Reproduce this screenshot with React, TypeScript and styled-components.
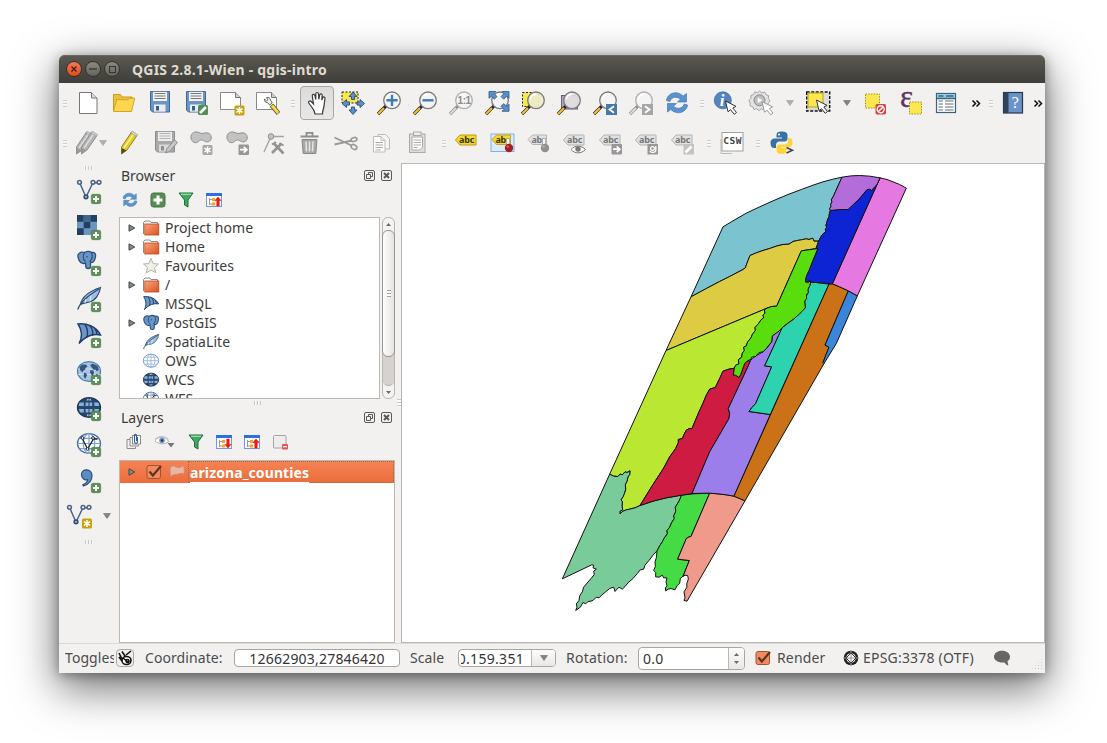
import React from "react";
import styled, { createGlobalStyle } from "styled-components";

const GlobalStyle = createGlobalStyle`
  * { box-sizing: border-box; }
  html, body { margin: 0; height: 100%; background: #fff; overflow: hidden; }
  body { font-family: "Noto Sans", "Open Sans", sans-serif; font-size: 14px; color: #3c3c3c; }
  svg { display: block; overflow: visible; flex: none; }
`;

/* ---------- window frame ---------- */

const Desktop = styled.div`
  width: 1107px;
  height: 743px;
  padding: 55px 62px 70px 59px;
  background: #fff;
`;

const Window = styled.div`
  width: 986px;
  height: 618px;
  display: flex;
  flex-direction: column;
  background: #f2f1f0;
  border-radius: 6px 6px 0 0;
  box-shadow: 0 14px 44px 2px rgba(0, 0, 0, 0.55), 0 2px 12px rgba(0, 0, 0, 0.35);
`;

const TitleBar = styled.div`
  height: 28px;
  flex: none;
  display: flex;
  align-items: center;
  gap: 3px;
  padding: 0 0 0 7px;
  border-radius: 6px 6px 0 0;
  background: linear-gradient(#5b5951, #3e3d39);
  box-shadow: inset 0 1px 0 #6a685f;
`;

const WindowButton = styled.span<{ $close?: boolean }>`
  width: 16px;
  height: 16px;
  border-radius: 50%;
  display: flex;
  align-items: center;
  justify-content: center;
  border: 1px solid #33322e;
  background: ${(p) => (p.$close ? "linear-gradient(#f37b55, #df4b1e)" : "linear-gradient(#8a887f, #65645c)")};
`;

const WindowTitle = styled.span`
  margin-left: 9px;
  font-weight: 700;
  font-size: 14px;
  letter-spacing: 0.22px;
  color: #dfdbd2;
  white-space: pre;
`;

/* ---------- tool bars ---------- */

const ToolRow = styled.div`
  height: 40px;
  flex: none;
  display: flex;
  align-items: center;
`;

const Slot = styled.div<{ $w?: number; $gap?: number }>`
  width: ${(p) => p.$w ?? 36}px;
  height: 40px;
  flex: none;
  display: flex;
  align-items: center;
  justify-content: center;
  gap: ${(p) => p.$gap ?? 0}px;
`;

const PressedButton = styled.div`
  width: 34px;
  height: 34px;
  display: flex;
  align-items: center;
  justify-content: center;
  border: 1px solid #a9a6a2;
  border-radius: 4px;
  background: linear-gradient(#dddbd9, #e9e8e6);
`;

const Grip = styled.div<{ $w: number; $pad?: number }>`
  width: ${(p) => p.$w}px;
  height: 40px;
  flex: none;
  display: flex;
  align-items: center;
  justify-content: center;
  padding-left: ${(p) => p.$pad ?? 0}px;
  &::after {
    content: "";
    width: 4px;
    height: 7px;
    background: repeating-linear-gradient(#cfcdca 0 1px, #fafafa 1px 2px, transparent 2px 3px);
  }
`;

const GripAcross = styled.div<{ $h: number }>`
  height: ${(p) => p.$h}px;
  flex: none;
  display: flex;
  align-items: center;
  justify-content: center;
  &::after {
    content: "";
    width: 8px;
    height: 4px;
    background: repeating-linear-gradient(90deg, #c9c7c4 0 1px, #fafafa 1px 2px, transparent 2px 3px);
  }
`;

const Icon24 = styled.svg.attrs({ viewBox: "0 0 24 24", width: 24, height: 24, fill: "none" })``;
const Icon16 = styled.svg.attrs({ viewBox: "0 0 16 16", width: 16, height: 16, fill: "none" })``;

const DownArrow = ({ dim }: { dim?: boolean }) => (
  <svg width="8" height="6" viewBox="0 0 8 6">
    <path d="M.5.5h7L4 5.500z" fill={dim ? "#b0aeac" : "#858381"} stroke={dim ? "#a2a09e" : "#6e6c6a"} strokeWidth=".6" />
  </svg>
);

const More = () => (
  <svg width="8" height="7" viewBox="0 0 8 7" fill="none" stroke="#111" strokeWidth="1.500">
    <path d="M.5.5l3 3-3 3M4.500.5l3 3-3 3" />
  </svg>
);

/* ---------- shared icon parts ---------- */

const GREY = "#a5a5a5";

const PlusBadge = ({ x = 14, y = 15 }: { x?: number; y?: number }) => (
  <g transform={`translate(${x} ${y})`}>
    <rect x=".3" y=".3" width="9.400" height="9.400" rx="1.600" fill="#5c9257" stroke="#467a43" strokeWidth=".6" />
    <path d="M5 2v6M2 5h6" stroke="#fff" strokeWidth="2" />
  </g>
);

const StarBadge = ({ x = 14, y = 14, color = "#c9a20c" }: { x?: number; y?: number; color?: string }) => (
  <g transform={`translate(${x} ${y})`}>
    <rect width="10" height="10" rx="1.600" fill={color} />
    <path d="M5 1.400v7.200M1.900 3.200l6.200 3.600M8.100 3.200L1.900 6.800" stroke="#fff" strokeWidth="1.500" />
  </g>
);

const Lens = ({ grey, fill = "#f4f4f4" }: { grey?: boolean; fill?: string }) => (
  <g>
    <path d="M1 23l7.800-7.800" stroke={grey ? "#8d8d8d" : "#222"} strokeWidth="3.200" />
    <path d="M1.300 22.700l5.700-5.700" stroke={grey ? "#dadada" : "#fbc62c"} strokeWidth="2" />
    <circle cx="15" cy="9.300" r="8.300" fill={fill} fillOpacity=".92" stroke={grey ? "#b0b0b0" : "#7c7c7c"} strokeWidth="1.300" />
    <path d="M9.200 8.300a6.200 6.200 0 0 1 5.700-5.200" stroke="#fff" strokeWidth="1.600" />
  </g>
);

const Tag = ({ on, children }: { on?: boolean; children?: React.ReactNode }) => (
  <Icon24>
    <path
      d="M1.500 9L6 4h16v10H6z"
      fill={on ? "#f4d92c" : "#e2e2e2"}
      stroke={on ? "#b89a10" : "#b3b3b3"}
    />
    <text x="5" y="12.300" fontSize="9" fontWeight="700" fontFamily="Noto Sans, sans-serif" letterSpacing="-.2" fill={on ? "#3c3410" : "#777"}>
      abc
    </text>
    {children}
  </Icon24>
);

const Disk = ({ grey, children }: { grey?: boolean; children?: React.ReactNode }) => (
  <Icon24>
    <path
      d="M2.500.5h19v20.500H4.500l-2-2z"
      fill={grey ? "#a9a9a9" : "#6b95c7"}
      stroke={grey ? "#8c8c8c" : "#3c6797"}
    />
    <rect x="5" y=".8" width="14" height="9.200" fill={grey ? "#ececec" : "#f3f3f3"} />
    <path d="M6.500 2.500h11M6.500 5h11M6.500 7.500h11" stroke={grey ? "#b5b5b5" : "#777"} />
    <rect x="6" y="13.500" width="11.500" height="7.200" fill={grey ? "#dadada" : "#ececec"} />
    <rect x="8" y="15" width="3" height="4.500" fill={grey ? "#909090" : "#35618f"} />
    {children}
  </Icon24>
);

const Cursor = ({ x, y, grey }: { x: number; y: number; grey?: boolean }) => (
  <path
    transform={`translate(${x} ${y})`}
    d="M0 0l2.500 10.700 2.600-2 3.600 4.600 2.300-1.800-3.700-4.500 3.200-1.600z"
    fill="#fff"
    stroke={grey ? "#999" : "#333"}
    strokeWidth="1"
  />
);

const Pencil = ({ grey }: { grey?: boolean }) => (
  <g>
    <path d="M2.500 16L12.500 1l5.500 3.500L8 19l-5.500 4z" fill={grey ? "#b4b4b4" : "#e3cd2a"} stroke={grey ? "#8f8f8f" : "#97831a"} />
    <path d="M5 17L15 2.500" stroke={grey ? "#dcdcdc" : "#f8f09a"} strokeWidth="1.500" />
    <path d="M2.700 17L7.500 19.500l-5 3.500z" fill={grey ? "#999" : "#4f4a35"} />
    <path d="M12 2L13.300.2 18.600 3.600l-1.200 1.800z" fill={grey ? "#ccc" : "#d8d8d8"} stroke={grey ? "#999" : "#888"} strokeWidth=".6" />
  </g>
);

const Blob = () => (
  <path
    d="M2 8c-.6-4 2.500-6.500 6-6 3 .5 4 2.200 7 1.200C19 2 22.600 4 22.200 8c-.3 4-4 4.600-6.500 3.200-2.400-1.400-4-2-6 .2C7 14 2.600 12.500 2 8z"
    fill="#c2c2c2"
    stroke="#8f8f8f"
  />
);

const ArrowBadge = ({ x = 13.5, y = 13.5 }: { x?: number; y?: number }) => (
  <g transform={`translate(${x} ${y})`}>
    <rect width="10.500" height="10.500" rx="1" fill="#979797" />
    <path d="M1.500 5.200h6M5.200 2.300l3.200 2.900-3.200 3" stroke="#fff" strokeWidth="1.700" />
  </g>
);

const GlobeGrid = ({ fill = "#fff", line = "#6f97c8", edge = "#3f6ba0" }: { fill?: string; line?: string; edge?: string }) => (
  <g transform="translate(12 11.500)">
    <ellipse rx="11.500" ry="9.800" fill={fill} stroke={edge} strokeWidth="1.300" />
    <path d="M-11.500 0h23M0-9.800v19.600M-9.600-5.200h19.200M-9.600 5.200h19.200" stroke={line} strokeWidth="1.200" />
    <ellipse rx="5.800" ry="9.800" stroke={line} strokeWidth="1.200" />
  </g>
);

const WorldMap = () => (
  <g>
    <ellipse cx="12" cy="11.500" rx="11.500" ry="9.800" fill="#a9c4e3" stroke="#4f7cb0" strokeWidth="1.200" />
    <path d="M1 9h22M1 14.500h22M7 3v17M17 3v17" stroke="#d9e6f3" strokeWidth=".8" />
    <path
      d="M2.500 7l3-2.500 3.500 0 1.500 2-2 1.500-.5 2-1.500.5-1 2L3 10zM7 12.500l2.500 1 .5 2-2 3.500-1.500-2.500zM13 5l3-1.500 4.500 2.500 1.500 3.500-2 2-1.500-2-1.500.5-2-2zM13.500 10l3 .5.5 2.500-1.500 3.500-1.500-2.500-1-1.500z"
      fill="#35567f"
    />
    <circle cx="20" cy="15" r="1" fill="#35567f" />
  </g>
);

const DarkGlobe = () => (
  <g>
    <ellipse cx="12" cy="11.500" rx="11.500" ry="9.800" fill="#27466b" stroke="#1d3554" strokeWidth="1.300" />
    <path d="M2.500 6.500h4.300v3.500H1.600zM8.800 6.500h6.400v3.500H8.400zM17.200 6.500h4.300l.9 3.500h-5zM1.600 13h5.200v3.500H3.200zM8.400 13h7.200l-.4 3.500H8.800zM17.400 13h5l-1.600 3.500h-3.600z" fill="#8bb0d9" />
    <path d="M9.600 4.500l1-1.800h2.800l1 1.800zM9.600 18.500h4.800l-1 1.800h-2.800z" fill="#c3d7ec" />
    <path d="M12 2v19" stroke="#27466b" strokeWidth="1" />
  </g>
);

const Vee = () => (
  <g stroke="#4b6580" strokeWidth="1.500">
    <path d="M3 4.500l5.500 12.500M9.700 16.700L15.500 4.500M18 3.700h2.500" />
    <circle cx="2.500" cy="3.300" r="1.900" fill="#f2f1f0" />
    <circle cx="16" cy="3.300" r="1.900" fill="#f2f1f0" />
    <circle cx="22" cy="3.300" r="1.900" fill="#f2f1f0" />
    <circle cx="9" cy="17.800" r="1.900" fill="#8fb1da" stroke="#2e4f77" />
  </g>
);

const Elephant = () => (
  <g>
    <path
      d="M1 4c1-3 4-3.400 6.500-2.500C10 .2 13 .4 14.500 1.500c3-.8 4.500 1 4 4-.4 3-1.700 5.500-3.500 6l-1.500-.5v4.500c0 2.500-4.500 2.800-4.700 0L8.500 12l-2 .5C3 13 .5 7 1 4z"
      fill="#6a94c6"
      stroke="#2c4d78"
      strokeWidth="1.300"
    />
    <path d="M7.500 2C5.500 5 6 8.500 8.500 10.500M14.500 1.800c1.200 3 .5 6.500-1.700 8.700M10 5v1.500" stroke="#2c4d78" strokeWidth="1.200" />
  </g>
);

const Feather = () => (
  <g>
    <path d="M3.500 17.500C5 9 13 4 23.500.5c-1 6.500-5 13-11 14.500-3 .8-6 .5-9 2.500z" fill="#9fbfe3" stroke="#2d4c74" strokeWidth="1.200" />
    <path d="M.8 22.500C3 15 12 8 22 2" stroke="#2d4c74" strokeWidth="1.300" />
    <path d="M8 16l1-4M13 14.500l1-6" stroke="#fff" strokeWidth=".8" />
  </g>
);

const Sail = () => (
  <g>
    <path d="M1 1c8-1 18 2 22.500 11-7-1.500-15 1-21.500 8.500C5.500 14 5 7 1 1z" fill="#6d97c9" stroke="#203e66" strokeWidth="1.400" />
    <path d="M8 1.400c3 5 3 10 1.500 13.500M13 2.800c3 4 3.300 7.500 2.200 9.800M18 6c1.700 2 2.200 4 1.700 5.800" stroke="#203e66" strokeWidth="1.400" />
  </g>
);

const RefreshArrows = () => (
  <g fill="#5b92d0" stroke="#4379b4" strokeWidth=".7">
    <path d="M1.500 9.500C2 4 8 .5 13.500 2.200c1.800.5 3.500 1.600 4.600 2.900L21.500 2.500v8.500h-9l3-2.700C12 5 6.500 5.600 4.800 10.500z" />
    <path d="M22.500 14c-.5 5.500-6.500 9-12 7.300-1.800-.5-3.500-1.600-4.600-2.900L2.500 21v-8.500h9l-3 2.700c3.500 3.300 9 2.700 10.700-2.200z" />
  </g>
);

/* ---------- first tool bar ---------- */

const NewFile = () => (
  <Icon24>
    <path d="M3.500 1.500h12l5.500 5.500v15.500H3.500z" fill="#fff" stroke="#777" />
    <path d="M15.500 1.500V7H21" fill="#ddd" stroke="#777" />
  </Icon24>
);

const OpenFolder = () => (
  <Icon24>
    <path d="M1.500 20V3.500h7l1.500 2.500h10V10" fill="#efc13b" stroke="#c99a22" />
    <path d="M1.500 20.500L4.700 8.500l11.500.3 1.300-1.600h5.200L19.500 20.500z" fill="#fdd54f" stroke="#d3a526" />
  </Icon24>
);

const SaveAs = () => (
  <Disk>
    <rect x="14" y="14" width="10" height="10" rx="1.500" fill="#4f9155" />
    <path d="M16 22l6-6" stroke="#fff" strokeWidth="2.600" />
  </Disk>
);

const NewComposer = () => (
  <Icon24>
    <path d="M.5 1.500h15l5 5v12H.5z" fill="#fff" stroke="#888" />
    <path d="M15.500 1.500v5h5" fill="#ccc" stroke="#777" />
    <StarBadge x={14.500} y={14.500} />
  </Icon24>
);

const ComposerManager = () => (
  <Icon24>
    <path d="M.5 1.500h15l5 5v12H.5z" fill="#fff" stroke="#888" />
    <path d="M15.500 1.500v5h5" fill="#ccc" stroke="#777" />
    <path d="M10.500 6.500c2-.5 3.700.5 4 2.500l1.700 3-2.500 2-2.200-2.400C9 11.500 8 10 8.500 8l2 1.800 1.500-1z" fill="#f0f0f0" stroke="#555" strokeWidth=".9" />
    <path d="M15.500 14l7 8.500" stroke="#6d5b14" strokeWidth="4.600" />
    <path d="M16 14.500l6.200 7.500" stroke="#f0d860" strokeWidth="2.800" />
  </Icon24>
);

const Hand = () => (
  <Icon24>
    <path
      transform="translate(1 .5)"
      d="M9 22.500c0-2.500-1.200-4-3-6.500L2.800 11.500c-1-1.600 1.200-2.700 2.400-1.500l2.300 2.500L6.300 4.500c-.3-1.900 2.200-2.200 2.600-.5L9.800 8V2.500c0-2 2.600-2 2.700 0l.3 5.300.9-4.300c.4-1.700 2.600-1.300 2.500.4l-.5 4.700 1-2.400c.7-1.400 2.600-.7 2.300.8-.7 3.500-.5 7-1.700 10.500-.4 1.500-.8 3-.8 5z"
      fill="#fff"
      stroke="#3a3a3a"
      strokeWidth="1.200"
    />
  </Icon24>
);

const PanSelection = () => (
  <Icon24>
    <rect x="1" y="1" width="16" height="11" fill="#f8e84f" stroke="#222" strokeDasharray="2 1.500" />
    <path
      d="M12 1l4 4.500h-2.400v3h-3.200v-3H8zM12 23.500l4-4.500h-2.400v-3h-3.200v3H8zM1 12.500l4.500-4v2.400h3v3.200h-3v2.400zM23.500 12.500l-4.500-4v2.400h-3v3.200h3v2.400z"
      fill="#5f8fc9"
      stroke="#284d7c"
      strokeWidth=".9"
    />
  </Icon24>
);

const ZoomIn = () => (
  <Icon24>
    <Lens />
    <path d="M15 3.700v11.200M9.400 9.300h11.200" stroke="#4379b8" strokeWidth="2.400" />
  </Icon24>
);

const ZoomOut = () => (
  <Icon24>
    <Lens />
    <path d="M9.400 9.300h11.200" stroke="#4379b8" strokeWidth="2.400" />
  </Icon24>
);

const ZoomNative = () => (
  <Icon24>
    <Lens grey />
    <text x="8.500" y="12.800" fontSize="10" fontWeight="700" fontFamily="Liberation Sans, sans-serif" letterSpacing="-.4" fill="#8a8a8a">1:1</text>
  </Icon24>
);

const ZoomFull = () => (
  <Icon24>
    <Lens />
    <path
      d="M4 .5h6.800L9 2.500l3 3-2.700 2.700-3-3L4 7.300zM24 .5v6.800L21.700 5.200l-3 3L16 5.500l3-3L17.200.5zM24 20.300h-7l2-2-3-3 2.700-2.700 3 3 2.300-2.300z"
      fill="#5d8fc8"
      stroke="#2c5688"
      strokeWidth=".8"
    />
  </Icon24>
);

const ZoomSelection = () => (
  <Icon24>
    <rect x="1.500" y="1.500" width="16" height="14" fill="#f9e84b" stroke="#222" strokeDasharray="2 1.500" />
    <Lens fill="#efeccb" />
  </Icon24>
);

const ZoomLayer = () => (
  <Icon24>
    <rect x="4.500" y="4.500" width="16" height="13.500" fill="#b7a5b6" stroke="#6d5c6d" />
    <Lens fill="#e3dfe3" />
  </Icon24>
);

const ZoomLast = () => (
  <Icon24>
    <Lens />
    <rect x="13" y="13" width="11" height="11" fill="#4678ad" />
    <path d="M21 15.200l-4.500 3.300 4.500 3.300" stroke="#fff" strokeWidth="1.800" />
  </Icon24>
);

const ZoomNext = () => (
  <Icon24>
    <Lens grey />
    <rect x="13" y="13" width="11" height="11" fill="#a6a6a6" />
    <path d="M16 15.200l4.500 3.300-4.500 3.300" stroke="#fff" strokeWidth="1.800" />
  </Icon24>
);

const Refresh = () => (
  <Icon24>
    <RefreshArrows />
  </Icon24>
);

const Identify = () => (
  <Icon24>
    <circle cx="9.800" cy="9.300" r="8.500" fill="#5585bd" stroke="#3f70aa" strokeWidth=".8" />
    <text x="6.700" y="15" fontSize="17" fontWeight="700" fontStyle="italic" fontFamily="Liberation Serif, serif" fill="#fff">i</text>
    <Cursor x={12.500} y={10} />
  </Icon24>
);

const RunAction = () => (
  <Icon24>
    <path
      d="M10.500 0l2.300 1.800 2.900-.7 1.200 2.600 2.700.9-.2 2.900 1.600 2.400-2 2.100.1 2.900-2.700 1-1.300 2.600-2.900-.6-2.200 1.700-2.300-1.800-2.800.6-1.200-2.600-2.700-1 .2-2.900L0 9.500l2-2.100-.1-2.900 2.700-1L5.800.9l2.800.7z"
      fill="#e4e4e4"
      stroke={GREY}
    />
    <circle cx="10.500" cy="9.300" r="5.500" fill="#bdbdbd" stroke="#888" />
    <path d="M8.700 6.500l4.800 2.800-4.800 2.800z" fill="#fff" />
    <Cursor x={13} y={10.500} grey />
  </Icon24>
);

const SelectFeatures = () => (
  <Icon24>
    <rect x=".7" y="1" width="23" height="19" fill="#dcdcdc" stroke="#111" strokeWidth="1.400" strokeDasharray="3 1.500" />
    <rect x="2" y="2" width="15" height="14" fill="#fbe750" stroke="#b8a21c" />
    <Cursor x={10.500} y={9} />
  </Icon24>
);

const Deselect = () => (
  <Icon24>
    <rect x="2.500" y="3" width="14" height="14" fill="#fbe750" stroke="#a89120" strokeDasharray="1.500 1.200" />
    <rect x="12.500" y="13" width="10.500" height="10.500" rx="1.800" fill="#e23c39" />
    <circle cx="17.700" cy="18.200" r="3.500" stroke="#fff" strokeWidth="1.400" />
    <path d="M15.500 20.400l4.500-4.400" stroke="#fff" strokeWidth="1.400" />
  </Icon24>
);

const Expression = () => (
  <Icon24>
    <text x="1" y="16" fontSize="31" fontFamily="Liberation Serif, serif" fill="#5c3566" stroke="#5c3566" strokeWidth=".4">ε</text>
    <rect x="10.500" y="11" width="12" height="12" fill="#fbe750" stroke="#a89120" strokeDasharray="1.500 1.200" />
  </Icon24>
);

const AttributeTable = () => (
  <Icon24>
    <rect x="1.500" y="2.500" width="19" height="19" fill="#fff" stroke="#3d6178" strokeWidth="1.200" />
    <rect x="2" y="3" width="18" height="4.200" fill="#8fd0ef" />
    <path d="M3.500 5h5M11 5h7.500M1.500 7.500h19" stroke="#3d6178" strokeWidth="1.300" />
    <path d="M3.500 10h4.500M10 10h8.500M3.500 13h4.500M10 13h8.500M3.500 16h4.500M10 16h8.500M3.500 19h4.500M10 19h8.500" stroke="#5c7078" strokeWidth="1.200" />
  </Icon24>
);

const Help = () => (
  <Icon24>
    <rect x="2.500" y="1.500" width="19" height="20.500" fill="#6a94c8" stroke="#26384c" strokeWidth="1.200" />
    <rect x="2.500" y="1.500" width="5" height="20.500" fill="#2f4359" />
    <text x="10.800" y="17" fontSize="16" fontFamily="Liberation Serif, serif" fill="#fff">?</text>
  </Icon24>
);

/* ---------- second tool bar ---------- */

const EditsMenu = () => (
  <Icon24>
    <g transform="translate(0 0)"><Pencil grey /></g>
    <g transform="translate(5 0)"><Pencil grey /></g>
  </Icon24>
);

const ToggleEdit = () => (
  <Icon24>
    <g transform="translate(2 0)"><Pencil /></g>
  </Icon24>
);

const SaveEdits = () => (
  <Disk grey>
    <path d="M12.500 22l1.500-4.500L21.500 9l3 2.500-7.500 8.500z" fill="#c6c6c6" stroke="#8d8d8d" />
  </Disk>
);

const AddFeature = () => (
  <Icon24>
    <g transform="translate(0 -1)"><Blob /></g>
    <StarBadge x={13.500} y={14} color="#a6a6a6" />
  </Icon24>
);

const MoveFeature = () => (
  <Icon24>
    <g transform="translate(0 -1)"><Blob /></g>
    <ArrowBadge />
  </Icon24>
);

const NodeTool = () => (
  <Icon24>
    <path d="M3 21L10 5.500h13" stroke={GREY} strokeWidth="1.400" />
    <circle cx="10" cy="5.500" r="2.800" fill="#c4c4c4" stroke="#8e8e8e" />
    <path d="M11 22l9-9M13 12.500l9.500 10" stroke="#929292" strokeWidth="2.600" />
    <path d="M11 13.500l4-2.500M18.500 12l4 2.500" stroke="#929292" strokeWidth="2" />
  </Icon24>
);

const Trash = () => (
  <Icon24>
    <path d="M3.500 5.500h18M9.500 5V1.800h6V5" stroke="#8d8d8d" strokeWidth="1.800" />
    <path d="M5 8.500h15l-1.200 14H6.200z" fill="#a8a8a8" stroke="#888" />
    <path d="M9 10.500l.5 10M12.500 10.500v10M16 10.500l-.5 10" stroke="#e6e6e6" strokeWidth="1.500" />
  </Icon24>
);

const Cut = () => (
  <Icon24 stroke="#999">
    <path d="M1.500 6.500l17 8M1.500 13.500L19 9.500" strokeWidth="1.900" />
    <ellipse cx="21" cy="8.500" rx="3" ry="1.900" transform="rotate(-15 21 8.500)" strokeWidth="1.600" />
    <ellipse cx="21" cy="16" rx="3" ry="2.200" transform="rotate(30 21 16)" strokeWidth="1.600" />
  </Icon24>
);

const Copy = () => (
  <Icon24 stroke="#bbb">
    <path d="M9 3.500h7.500l4 4v10.500H9z" fill="#f4f4f4" />
    <path d="M4.500 5.500H12l4 4v11.500H4.500z" fill="#fff" />
    <path d="M12 5.500v4h4" />
    <path d="M6.500 11.500H14M6.500 14H14M6.500 16.500H14M6.500 19h5" stroke="#aaa" />
  </Icon24>
);

const Paste = () => (
  <Icon24 stroke="#aaa">
    <rect x="4.500" y="3" width="15.500" height="18.500" fill="#ddd" />
    <path d="M7 6h10.500v10l-3 3H7z" fill="#fff" />
    <rect x="8.500" y="1" width="7.500" height="3.500" fill="#eee" />
    <path d="M8.500 9h7.500M8.500 11.500h7.500M8.500 14h7.500M8.500 16.500h4" />
  </Icon24>
);

const LabelPin = ({ on }: { on?: boolean }) => (
  <Icon24>
    {on && <rect x="1" y="3" width="23" height="17.500" fill="#dcebf9" stroke="#82b1e0" />}
    <path d="M2 8.500L6.500 4h14v9.500h-14z" fill={on ? "#f4d92c" : "#e2e2e2"} stroke={on ? "#c1a51b" : "#b3b3b3"} />
    <text x="5.500" y="12" fontSize="9" fontWeight="700" fontFamily="Noto Sans, sans-serif" letterSpacing="-.3" fill={on ? "#3c3410" : "#777"}>ab</text>
    <path d="M18 15V8" stroke={on ? "#fff" : "#f5f5f5"} strokeWidth="3" />
    <path d="M16.500 15V7.500h3V15" stroke="#999" strokeWidth=".7" />
    <circle cx="19" cy="17" r="4.200" fill={on ? "#a81f1f" : "#8f8f8f"} />
    <circle cx="17.700" cy="15.600" r="1.200" fill={on ? "#d36a6a" : "#b5b5b5"} />
  </Icon24>
);

const LabelShow = () => (
  <Tag>
    <path d="M9 18.500c4-4.500 10-4.500 14.500 0-4.500 4.500-10.500 4.500-14.500 0z" fill="#fff" stroke="#777" />
    <circle cx="16" cy="18" r="2.700" fill="#777" />
  </Tag>
);

const LabelMove = () => (
  <Tag>
    <ArrowBadge x={13.500} y={13} />
  </Tag>
);

const LabelRotate = () => (
  <Tag>
    <rect x="13.500" y="13" width="10.500" height="10.500" fill="#979797" />
    <path d="M21.800 15v4c0 2.800-4.500 3.300-6 .8" stroke="#fff" strokeWidth="1.300" />
    <circle cx="18.500" cy="17.500" r="1.900" stroke="#fff" strokeWidth="1.200" />
  </Tag>
);

const LabelEdit = () => (
  <Tag>
    <rect x="13.500" y="13" width="10.500" height="10.500" fill="#c2c2c2" />
    <path d="M15.500 21.500l6-6" stroke="#fff" strokeWidth="2.600" />
  </Tag>
);

const Csw = () => (
  <Icon24>
    <path d="M1 8.500v14h11" stroke="#bbb" />
    <rect x="2" y="1.500" width="21" height="18.500" fill="#fff" stroke="#a2a2a2" />
    <text x="3.300" y="13.300" fontSize="9.500" fontWeight="700" fontFamily="DejaVu Sans Mono, monospace" letterSpacing=".5" fill="#444">CSW</text>
  </Icon24>
);

const Python = () => (
  <Icon24>
    <path
      d="M11.500.5C8 .5 6.500 1.500 6.500 4v2.500h5.500v1H4.500C2 7.500.5 9 .5 12s1.300 5 3.500 5h2v-3c0-2 1.500-3.500 3.500-3.500h5c1.800 0 3-1.200 3-3V4c0-2.500-2.500-3.500-6-3.500z"
      fill="#3672a4"
    />
    <path
      d="M11.500 23c3.500 0 5-1 5-3.500V17H11.500v-1h7.500c2.500 0 3.500-1.500 3.500-4.500s-1-4.500-3-4.500h-1.500v3c0 2-1.500 3.500-3.500 3.500h-5c-1.800 0-3 1.200-3 3v3c0 2.500 2 3.500 5 3.500z"
      fill="#ffd43b"
    />
    <circle cx="9" cy="3.500" r="1" fill="#fff" />
    <path d="M16.500 16.500l6 2.700-6 2.800" stroke="#444" strokeWidth="1.500" />
  </Icon24>
);

/* ---------- main body ---------- */

const Body = styled.div`
  height: 480px;
  flex: none;
  display: flex;
`;

const SideBar = styled.div`
  width: 60px;
  flex: none;
  display: flex;
  flex-direction: column;
`;

const SideSlot = styled.div<{ $menu?: boolean }>`
  height: 36.1px;
  flex: none;
  display: flex;
  align-items: center;
  padding-left: ${(p) => (p.$menu ? 8 : 18)}px;
  gap: 12px;
`;

const Docks = styled.div`
  width: 277px;
  flex: none;
  display: flex;
  flex-direction: column;
`;

const DockTitle = styled.div<{ $h: number; $lift?: number }>`
  height: ${(p) => p.$h}px;
  flex: none;
  display: flex;
  align-items: center;
  justify-content: space-between;
  padding: 0 4px ${(p) => p.$lift ?? 0}px 2px;
  font-size: 14px;
`;

const DockButtons = styled.span`
  display: flex;
  gap: 6px;
`;

const DockTools = styled.div<{ $h: number; $pad: number; $gap: number }>`
  height: ${(p) => p.$h}px;
  flex: none;
  display: flex;
  align-items: center;
  gap: ${(p) => p.$gap}px;
  padding: 0 0 6px ${(p) => p.$pad}px;
`;

const BrowserArea = styled.div`
  height: 182px;
  flex: none;
  display: flex;
  gap: 2px;
`;

const Tree = styled.div<{ $w: number; $h: number }>`
  width: ${(p) => p.$w}px;
  height: ${(p) => p.$h}px;
  flex: none;
  overflow: hidden;
  background: #fff;
  border: 1px solid #bcb9b4;
`;

const TreeRow = styled.div`
  height: 19px;
  display: flex;
  align-items: center;
  padding-left: 8px;
  font-size: 14px;
  line-height: 19px;
  white-space: pre;
`;

const Expander = styled.span<{ $hidden?: boolean }>`
  width: 15px;
  flex: none;
  visibility: ${(p) => (p.$hidden ? "hidden" : "visible")};
`;

const RowLabel = styled.span`
  margin-left: 6px;
  letter-spacing: 0.06px;
`;

const ScrollBar = styled.div`
  width: 13px;
  height: 182px;
  display: flex;
  flex-direction: column;
  align-items: center;
  border: 1px solid #b9b6b2;
  border-radius: 6px;
  background: #f4f3f2;
`;

const ScrollStep = styled.div<{ $h: number }>`
  height: ${(p) => p.$h}px;
  flex: none;
  display: flex;
  align-items: center;
`;

const ScrollThumb = styled.div`
  width: 13px;
  height: 127px;
  flex: none;
  z-index: 1;
  border: 1px solid #989591;
  border-radius: 6px;
  background: linear-gradient(90deg, #fdfdfd, #e6e4e2);
  display: flex;
  align-items: center;
  justify-content: center;
  &::after {
    content: "";
    width: 4px;
    height: 7px;
    background: repeating-linear-gradient(#a5a29e 0 1px, #fff 1px 3px);
  }
`;

const ScrollTrack = styled.div`
  width: 11px;
  height: 35px;
  flex: none;
  margin-top: -6px;
  border-bottom: 1px solid #b5b2ae;
  border-radius: 0 0 6px 6px;
  background: #d5d2cf;
`;

const LayerRow = styled.div`
  height: 22px;
  display: flex;
  align-items: center;
  padding-left: 8px;
  background: linear-gradient(#f58254, #eb6d3b);
  color: #fff;
  font-weight: 700;
  font-size: 14px;
`;

const RowIcon = styled.span<{ $ml: number }>`
  margin-left: ${(p) => p.$ml}px;
`;

const LayerName = styled.span`
  height: 22px;
  flex: 1;
  margin-left: 3px;
  padding-left: 1px;
  border: 1px dotted #a06a4c;
  line-height: 21px;
  text-decoration: underline;
  text-decoration-thickness: 1px;
  text-underline-offset: 4px;
  letter-spacing: 0.1px;
`;

const Splitter = styled.div`
  width: 5px;
  flex: none;
  display: flex;
  align-items: center;
  justify-content: center;
  &::after {
    content: "";
    width: 4px;
    height: 8px;
    background: repeating-linear-gradient(#c9c7c4 0 1px, #fafafa 1px 3px);
  }
`;

const MapCanvas = styled.div`
  flex: 1;
  background: #fff;
  border: 1px solid #bcb9b4;
  overflow: hidden;
`;

const TreeArrow = () => (
  <svg width="8" height="8" viewBox="0 0 8 8">
    <path d="M1 .8L6.800 4 1 7.200z" fill="#8a8886" stroke="#4a4846" />
  </svg>
);

const Folder = () => (
  <Icon16>
    <path d="M.5 14V2.500L2 1h5l1 1.500h6.500V5" fill="#fff" stroke="#8a8a8a" />
    <rect x="1.800" y="4" width="14" height="11" fill="url(#folder)" stroke="#b9471e" strokeWidth=".8" />
  </Icon16>
);

const Small = ({ children }: { children: React.ReactNode }) => (
  <svg width="16" height="16" viewBox="0 0 24 24" fill="none">{children}</svg>
);

const Star = () => (
  <Icon16>
    <path d="M8 .5l2.200 5.100 5.300.4-4 3.500 1.300 5.300L8 12l-4.800 2.800 1.300-5.300-4-3.500 5.300-.4z" fill="#f0f0ea" stroke="#b3b3a6" />
  </Icon16>
);

const AddBox = () => (
  <Icon16>
    <rect x="1" y="1" width="14" height="14" rx="2.500" fill="#588e53" stroke="#3f7440" />
    <path d="M8 3.500v9M3.500 8h9" stroke="#fff" strokeWidth="3" />
  </Icon16>
);

const Funnel = () => (
  <Icon16>
    <path d="M1 1h14L10 8v7L6.500 13V8z" fill="#3fa663" stroke="#1e7339" />
    <path d="M3 2.300h10" stroke="#a3e0b4" strokeWidth="1.200" />
  </Icon16>
);

const TreeToggle = ({ down }: { down?: boolean }) => (
  <Icon16>
    <rect x=".5" y="1.500" width="15" height="13" fill="#fff" stroke="#6f9ae0" />
    <rect x="0" y="1" width="16" height="3" fill="#2f6fe4" />
    <path d="M3.500 6v7M3.500 7.500h2.500M3.500 12h2.500" stroke="#999" />
    <path d="M6 6h3v3H6zM6 10.500h3v3H6z" fill="#f5a623" />
    <path d={down ? "M12 14l-3-3.500h1.800V5h2.400v5.500H15z" : "M12 5L9 8.500h1.800V14h2.400V8.500H15z"} fill="#ee1c10" stroke="#e01010" strokeWidth=".6" />
  </Icon16>
);

const DockFloat = () => (
  <svg width="11" height="11" viewBox="0 0 11 11" fill="none" stroke="#5b5957">
    <rect x=".5" y=".5" width="10" height="10" rx="1.500" />
    <path d="M4.500 4V2.500h4v4H7M2.500 4.500h4v4h-4z" />
  </svg>
);

const DockClose = () => (
  <svg width="11" height="11" viewBox="0 0 11 11" fill="none" stroke="#5b5957">
    <rect x=".5" y=".5" width="10" height="10" rx="1.500" />
    <path d="M3 3l5 5M8 3L3 8" strokeWidth="2" />
  </svg>
);

const LayerGroup = () => (
  <Icon16 stroke="#8b8b8b">
    <path d="M4 5.500H1v9h8.500V13" />
    <path d="M6.500 3.500H4v8.500h8.500V11" />
    <rect x="6.500" y="1.500" width="8" height="8.500" fill="#fff" />
    <path d="M11.500 3v4.500c0 2.500-3 2.500-3 0V1.500c0-1.500 2-1.500 2 0V7" stroke="#2f5e96" strokeWidth="1.100" />
  </Icon16>
);

const EyeMenu = () => (
  <svg width="22" height="16" viewBox="0 0 22 16" fill="none">
    <path d="M1 6.500C5 2 11 2 15 7.500 10 11 4.500 10.500 1 6.500z" fill="#fff" stroke="#b0b0b0" />
    <path d="M1 5C5 1.500 11 1.500 14.500 5.500" stroke="#c4c4c4" />
    <circle cx="8" cy="6.500" r="2.800" fill="#6d94c2" />
    <circle cx="8" cy="6.500" r="1.200" fill="#1f344e" />
    <path d="M13.500 9h7L17 13.500z" fill="#777" />
  </svg>
);

const RemoveLayer = () => (
  <Icon16>
    <rect x="1.500" y="1.500" width="12.500" height="12.500" rx="1" fill="#eeedec" stroke="#a4a4a4" />
    <rect x="10" y="10" width="6" height="5.500" rx="1" fill="#e8535a" />
    <path d="M11 12.700h4" stroke="#fff" strokeWidth="1.200" />
  </Icon16>
);

const CheckedBox = () => (
  <Icon16>
    <rect x="1" y="1.500" width="13.500" height="13" rx="2" fill="#f28a5f" stroke="#a4512f" />
    <path d="M3.500 7.500l3.300 4L15 2" stroke="#5b3324" strokeWidth="2.100" />
  </Icon16>
);

const PolygonGlyph = () => (
  <Icon16>
    <path d="M1.500 3c2-1.500 4-1 6 0s4.500.5 7-1.500c1 2.500.8 6 .5 8.500-2.500-1-4-.8-6 0S4.500 9.500 2 12.500C.8 9.500 1 5.500 1.500 3z" fill="#eab5a3" stroke="#c88b76" strokeWidth=".8" />
  </Icon16>
);

/* ---------- map data ---------- */

type County = { fill: string; d: string };

const counties: County[] = [
  { fill: "#7cc3d0", d: "M280 185L315 164 350 144 390 125 430 107 475 88 515 73 550 60 580 50 610 42 637 36 628 56 618 78 612 92 605 104 607 110 603 118 604 124 600 130 602 136 599 146 598 155 594 162 592 170 589 180 591 188 587 192 589 199 580 206 574 214 570 222 567 228 553 228 549 219 538 223 530 221 515 224 503 226 490 229 478 237 460 238 440 243 420 250 400 256 380 263 361 271 352 294 347 308 340 313 300 334 270 349 230 370 184 395z" },
  { fill: "#dccb43", d: "M184 395L230 370 270 349 300 334 340 313 347 308 352 294 361 271 380 263 400 256 420 250 440 243 460 238 478 237 490 229 503 226 515 224 530 221 538 223 549 219 553 228 567 228 559 250 515 257 441 423 426 424 412 429 109 556z" },
  { fill: "#bae832", d: "M109 556L412 429 404 434 406 444 400 450 402 458 394 464 386 476 376 487 377 496 368 508 364 518 354 530 350 542 342 546 344 556 338 564 336 576 326 584 328 596 318 600 314 609 298 612 280 618 270 640 257 667 240 672 230 690 220 714 208 740 187 790 179 790 170 795 164 806 158 820 146 823 146 832 138 850 128 864 120 875 110 894 100 912 85 935 70 958 31 1021 16 1028 0 1032 -10 1034 -22 1039 -29 1046 -29 1038 -21 1034 -23 1022 -22 1010 -26 1004 -20 995 -16 985 -12 972 -13 958 -8 948 -5 935 0 928 1 917 -8 922 -14 920 -22 929 -28 927 -36 934 -48 933 -60 927z" },
  { fill: "#7acb9a", d: "M-60 927L-48 933 -36 934 -28 927 -22 929 -14 920 -8 922 1 917 0 928 -5 935 -8 948 -13 958 -12 972 -16 985 -20 995 -26 1004 -22 1010 -23 1022 -21 1034 -29 1038 -29 1046 -22 1039 -10 1034 0 1032 16 1028 31 1021 70 1008 110 998 156 990 148 1008 137 1026 138 1040 132 1052 134 1060 126 1072 120 1086 112 1096 113 1106 104 1118 98 1130 90 1142 82 1157 70 1170 58 1186 46 1200 42 1212 32 1214 22 1226 10 1240 -4 1252 -14 1264 -22 1272 -32 1266 -38 1272 -44 1279 -48 1266 -60 1270 -72 1280 -84 1290 -92 1298 -100 1296 -110 1306 -126 1310 -132 1316 -140 1312 -148 1326 -162 1336 -158 1326 -160 1316 -152 1306 -150 1292 -142 1280 -138 1266 -128 1254 -116 1240 -106 1228 -108 1218 -100 1212 -110 1208 -108 1200 -114 1199 -158 1220 -202 1241z" },
  { fill: "#44db44", d: "M156 990L190 986 240 984 184 1114 178 1115 170 1120 144 1182 179 1186 160 1233 152 1240 150 1254 142 1262 136 1274 124 1270 116 1272 108 1277 107 1268 112 1262 109 1250 112 1238 102 1238 98 1230 88 1236 78 1235 78 1222 72 1216 77 1204 76 1190 80 1178 82 1157 90 1142 98 1130 104 1118 113 1106 112 1096 120 1086 126 1072 134 1060 132 1052 138 1040 137 1026 148 1008z" },
  { fill: "#f09a8c", d: "M240 984L265 986 290 989 313 993 346 1007 172 1308 163 1306 166 1298 163 1280 172 1266 171 1256 176 1242 174 1231 166 1230 160 1234 179 1186 144 1182 170 1120 178 1115 184 1114z" },
  { fill: "#ce1b42", d: "M314 609L311 630 318 630 328 637 333 628 345 595 352 587 362 587 357 600 296 730 300 745 298 760 240 860 187 985 156 990 110 998 70 1008 31 1021 70 958 85 935 100 912 110 894 120 875 128 864 138 850 146 832 146 823 158 820 164 806 170 795 179 790 187 790 208 740 220 714 230 690 240 672 257 667 270 640 280 618 298 612z" },
  { fill: "#9b7eea", d: "M458 487L405 602 426 605 378 715 366 728 358 739 422 748 313 993 290 989 265 986 240 984 187 985 240 860 298 760 300 745 296 730 357 600 362 587 368 580 380 571 400 560 412 548 426 530 428 512z" },
  { fill: "#2dd2af", d: "M543 350L598 357 422 748 358 739 366 728 378 715 426 605 405 602 458 487 490 463 527 428 525 410 530 396 533 384 535 372 541 360z" },
  { fill: "#5add0d", d: "M515 257L565 250 548 290 540 312 534 325 530 335 527 350 536 351 543 347 541 360 535 372 536 384 530 388 531 400 525 408 527 428 508 448 490 463 474 474 458 487 448 498 428 512 426 530 416 542 410 550 400 560 388 562 378 574 366 576 364 582 352 588 345 595 333 628 328 637 318 630 311 630 314 609 318 600 328 596 326 584 336 576 338 564 344 556 342 546 350 542 354 530 364 518 368 508 377 496 376 487 386 476 394 464 402 458 400 450 406 444 404 434 412 429 426 424 441 423z" },
  { fill: "#cb7118", d: "M598 357L608 356 630 365 656 377 586 540 598 546 580 592 583 595 346 1007 313 993z" },
  { fill: "#3b86da", d: "M656 377L683 392 620 535 583 595 580 592 598 546 586 540z" },
  { fill: "#e678e2", d: "M751 38L772 43 790 50 810 58 830 69 683 392 656 377 630 365 608 356z" },
  { fill: "#0c24d3", d: "M602 136L630 133 655 133 672 117 686 104 702 85 712 73 720 72 726 76 734 66 742 58 751 38 608 356 575 353 543 351 540 345 536 351 527 350 530 335 534 325 540 312 565 250 559 250 567 228 570 222 574 214 580 206 589 199 587 192 591 188 589 180 592 170 594 162 598 155 599 146z" },
  { fill: "#b36ddb", d: "M637 36L665 32 690 31 720 33 751 38 742 58 734 66 726 76 720 72 712 73 702 85 686 104 672 117 655 133 630 133 602 136 600 130 604 124 603 118 607 110 605 104 612 92 618 78 628 56z" },
];

const CountyMap = () => (
  <svg width="642" height="478" viewBox="-683 -3.500 1926 1434">
    <g stroke="#111" strokeWidth="3" strokeLinejoin="round">
      {counties.map((c) => (
        <path key={c.fill} d={c.d} fill={c.fill} />
      ))}
    </g>
  </svg>
);

/* ---------- status bar ---------- */

const StatusBar = styled.div`
  height: 30px;
  flex: none;
  display: flex;
  align-items: center;
  padding-bottom: 1px;
  border-top: 1px solid #dcdad8;
  color: #4c4c4c;
  white-space: pre;
`;

const StatusCell = styled.div<{ $ml: number; $w: number; $track?: number }>`
  margin-left: ${(p) => p.$ml}px;
  width: ${(p) => p.$w}px;
  flex: none;
  overflow: hidden;
  letter-spacing: ${(p) => p.$track ?? 0.08}px;
  line-height: 20px;
`;

const Field = styled.div<{ $ml: number; $w: number; $h: number; $center?: boolean }>`
  margin-left: ${(p) => p.$ml}px;
  width: ${(p) => p.$w}px;
  height: ${(p) => p.$h}px;
  flex: none;
  display: flex;
  align-items: center;
  justify-content: ${(p) => (p.$center ? "center" : "space-between")};
  overflow: hidden;
  border: 1px solid #a9a6a2;
  border-radius: 4px;
  background: #fff;
  color: #333;
`;

const FieldText = styled.span<{ $w?: number; $h?: number; $pad?: number; $end?: boolean; $track?: number }>`
  width: ${(p) => (p.$w ? `${p.$w}px` : "auto")};
  height: ${(p) => (p.$h ? `${p.$h}px` : "auto")};
  margin-left: ${(p) => p.$pad ?? 0}px;
  display: flex;
  align-items: center;
  justify-content: ${(p) => (p.$end ? "flex-end" : "flex-start")};
  overflow: hidden;
  letter-spacing: ${(p) => p.$track ?? 0}px;
  line-height: 17px;
`;

const FieldButton = styled.span<{ $w: number }>`
  width: ${(p) => p.$w}px;
  height: 100%;
  display: flex;
  flex-direction: column;
  align-items: center;
  justify-content: space-evenly;
  border-left: 1px solid #bbb8b4;
  background: linear-gradient(#fbfbfb, #e9e8e6);
`;

const MouseButton = styled.div`
  width: 18px;
  height: 18px;
  margin-left: 2px;
  margin-right: 1px;
  flex: none;
  border: 1px solid #aaa;
  border-radius: 4px;
  background: #efeeed;
  display: flex;
  align-items: center;
  justify-content: center;
`;

const StatusIcon = styled.div<{ $ml: number }>`
  margin-left: ${(p) => p.$ml}px;
`;

const SizeGrip = styled.div`
  width: 12px;
  height: 12px;
  margin: 12px 2px 0 auto;
  background: radial-gradient(circle, #c5c3c0 0.8px, transparent 1px) 0 0 / 3px 3px;
  clip-path: polygon(100% 0, 100% 100%, 0 100%);
`;

const Tiny = ({ up }: { up?: boolean }) => (
  <svg width="5" height="3" viewBox="0 0 5 3">
    <path d={up ? "M0 3h5L2.500 0z" : "M0 0h5L2.500 3z"} fill="#6b6967" />
  </svg>
);

/* ---------- composition ---------- */

const WfsGlobe = () => (
  <g>
    <GlobeGrid line="#7ba2d2" />
    <path d="M5.500 7l5 10 6-10h4" stroke="#222" strokeWidth="1.300" />
    <g fill="#fff" stroke="#222">
      <circle cx="5.500" cy="6" r="1.400" />
      <circle cx="16" cy="6" r="1.400" />
      <circle cx="10.500" cy="17" r="1.400" />
    </g>
  </g>
);

const browserRows: { label: string; icon: React.ReactNode; open?: boolean }[] = [
  { label: "Project home", icon: <Folder />, open: true },
  { label: "Home", icon: <Folder />, open: true },
  { label: "Favourites", icon: <Star /> },
  { label: "/", icon: <Folder />, open: true },
  { label: "MSSQL", icon: <Small><Sail /></Small> },
  { label: "PostGIS", icon: <Small><g transform="scale(1.250)"><Elephant /></g></Small>, open: true },
  { label: "SpatiaLite", icon: <Small><Feather /></Small> },
  { label: "OWS", icon: <Small><GlobeGrid line="#8fb2dc" edge="#5e8cc4" /></Small> },
  { label: "WCS", icon: <Small><DarkGlobe /></Small> },
  { label: "WFS", icon: <Small><WfsGlobe /></Small> },
];

const viewTools = [PanSelection, ZoomIn, ZoomOut, ZoomNative, ZoomFull, ZoomSelection, ZoomLayer, ZoomLast, ZoomNext, Refresh];
const fileTools = [NewFile, OpenFolder, Disk, SaveAs, NewComposer, ComposerManager];
const editTools = [ToggleEdit, SaveEdits, AddFeature, MoveFeature, NodeTool, Trash, Cut, Copy, Paste];

const RasterGrid = () => (
  <g>
    <rect x="0" y="0" width="20" height="20" fill="#6b95c7" />
    <path d="M0 0h6.700v6.700H0zM6.700 6.700h6.600v6.600H6.700zM13.300 0H20v6.700h-6.700zM0 13.300h6.700V20H0z" fill="#24405f" />
    <path d="M6.700 0h6.600v6.700H6.700z" fill="#41658f" />
  </g>
);

const Comma = () => (
  <path d="M4.500 6.500c0-6.500 10.500-6.300 10.500 1 0 5.500-4 9-8.500 10.500l-.7-1.300c3-1.200 4.700-3 4.900-5.200-3.500 1.200-6.200-1.500-6.200-5z" fill="#5c8cc3" stroke="#2c4f7d" strokeWidth="1.200" />
);

const sideTools = [Vee, RasterGrid, Elephant, Feather, Sail, WorldMap, DarkGlobe, WfsGlobe, Comma];

export default function App() {
  return (
    <Desktop>
      <GlobalStyle />
      <Window>
        <TitleBar>
          <WindowButton $close>
            <svg width="6" height="6" viewBox="0 0 6 6" stroke="#4a1d0d" strokeWidth="1.300"><path d="M.5.5l5 5M5.500.5l-5 5" /></svg>
          </WindowButton>
          <WindowButton>
            <svg width="8" height="6" viewBox="0 0 8 6" stroke="#35342f" strokeWidth="1.300"><path d="M0 3h8" /></svg>
          </WindowButton>
          <WindowButton>
            <svg width="7" height="7" viewBox="0 0 7 7" stroke="#35342f" fill="none"><rect x=".5" y=".5" width="6" height="6" /></svg>
          </WindowButton>
          <WindowTitle>QGIS 2.8.1-Wien - qgis-intro</WindowTitle>
        </TitleBar>

        <ToolRow>
          <Grip $w={11} />
          {fileTools.map((T, i) => <Slot key={i}><T /></Slot>)}
          <Grip $w={13} />
          <Slot><PressedButton><Hand /></PressedButton></Slot>
          {viewTools.map((T, i) => <Slot key={i}><T /></Slot>)}
          <Grip $w={12} $pad={2} />
          <Slot><Identify /></Slot>
          <Slot><RunAction /></Slot>
          <Slot $w={21}><DownArrow dim /></Slot>
          <Slot><SelectFeatures /></Slot>
          <Slot $w={21}><DownArrow /></Slot>
          <Slot><Deselect /></Slot>
          <Slot><Expression /></Slot>
          <Slot><AttributeTable /></Slot>
          <Slot $w={22}><More /></Slot>
          <Grip $w={8} />
          <Slot><Help /></Slot>
          <Slot $w={14}><More /></Slot>
        </ToolRow>

        <ToolRow>
          <Grip $w={11} />
          <Slot $w={41} $gap={1}><EditsMenu /><DownArrow dim /></Slot>
          {editTools.map((T, i) => <Slot key={i}><T /></Slot>)}
          <Grip $w={13} $pad={5} />
          <Slot><Tag on /></Slot>
          <Slot><LabelPin on /></Slot>
          <Slot><LabelPin /></Slot>
          <Slot><LabelShow /></Slot>
          <Slot><LabelMove /></Slot>
          <Slot><LabelRotate /></Slot>
          <Slot><LabelEdit /></Slot>
          <Grip $w={14} $pad={4} />
          <Slot><Csw /></Slot>
          <Grip $w={14} $pad={2} />
          <Slot><Python /></Slot>
        </ToolRow>

        <Body>
          <SideBar>
            <GripAcross $h={10} />
            {sideTools.map((T, i) => (
              <SideSlot key={i}>
                <Icon24><T /><PlusBadge /></Icon24>
              </SideSlot>
            ))}
            <SideSlot $menu>
              <Icon24><Vee /><StarBadge x={15} y={14.500} /></Icon24>
              <DownArrow />
            </SideSlot>
            <GripAcross $h={16} />
          </SideBar>

          <Docks>
            <DockTitle $h={25}>
              <span>Browser</span>
              <DockButtons><DockFloat /><DockClose /></DockButtons>
            </DockTitle>
            <DockTools $h={29} $pad={3} $gap={12}>
              <svg width="16" height="16" viewBox="0 0 24 24"><RefreshArrows /></svg>
              <AddBox />
              <Funnel />
              <TreeToggle />
            </DockTools>
            <BrowserArea>
              <Tree $w={261} $h={182}>
                {browserRows.map((r) => (
                  <TreeRow key={r.label}>
                    <Expander $hidden={!r.open}><TreeArrow /></Expander>
                    {r.icon}
                    <RowLabel>{r.label}</RowLabel>
                  </TreeRow>
                ))}
              </Tree>
              <ScrollBar>
                <ScrollStep $h={12}><Tiny up /></ScrollStep>
                <ScrollThumb />
                <ScrollTrack />
                <ScrollStep $h={12}><Tiny /></ScrollStep>
              </ScrollBar>
            </BrowserArea>
            <GripAcross $h={7} />
            <DockTitle $h={24} $lift={2}>
              <span>Layers</span>
              <DockButtons><DockFloat /><DockClose /></DockButtons>
            </DockTitle>
            <DockTools $h={30} $pad={7} $gap={12}>
              <LayerGroup />
              <EyeMenu />
              <Funnel />
              <TreeToggle down />
              <TreeToggle />
              <RemoveLayer />
            </DockTools>
            <Tree $w={276} $h={183}>
              <LayerRow>
                <Expander><TreeArrow /></Expander>
                <RowIcon $ml={3}><CheckedBox /></RowIcon>
                <RowIcon $ml={7}><PolygonGlyph /></RowIcon>
                <LayerName>arizona_counties</LayerName>
              </LayerRow>
            </Tree>
          </Docks>

          <Splitter />

          <MapCanvas>
            <CountyMap />
          </MapCanvas>
        </Body>

        <StatusBar>
          <StatusCell $ml={6} $w={49}>Toggles</StatusCell>
          <MouseButton>
            <svg width="16" height="16" viewBox="0 0 16 16" fill="none" stroke="#111" strokeWidth="1.600">
              <path d="M2 3l3 6M5 1.500l4 6M2 7l3 4M9 5l5-4" />
              <ellipse cx="9.500" cy="10.500" rx="4.500" ry="4" fill="#fff" />
              <path d="M6 8l6 5M10.500 9.500a1.500 1.500 0 1 0 .1 0" />
            </svg>
          </MouseButton>
          <StatusCell $ml={10} $w={85}>Coordinate:</StatusCell>
          <Field $ml={4} $w={166} $h={18} $center><FieldText $track={0.2}>12662903,27846420</FieldText></Field>
          <StatusCell $ml={10} $w={44}>Scale</StatusCell>
          <Field $ml={4} $w={98} $h={18}>
            <FieldText $w={63} $h={11} $pad={2} $end $track={0.3}>0.159.351</FieldText>
            <FieldButton $w={24}><DownArrow /></FieldButton>
          </Field>
          <StatusCell $ml={10} $w={69} $track={0.25}>Rotation:</StatusCell>
          <Field $ml={3} $w={107} $h={23}>
            <FieldText $pad={4} $track={0.2}>0.0</FieldText>
            <FieldButton $w={16}><Tiny up /><Tiny /></FieldButton>
          </Field>
          <StatusIcon $ml={10}><CheckedBox /></StatusIcon>
          <StatusCell $ml={6} $w={60} $track={0.15}>Render</StatusCell>
          <StatusIcon $ml={6}>
            <svg width="16" height="16" viewBox="0 0 16 16" fill="none">
              <circle cx="8" cy="8" r="7.300" fill="#222" />
              <path d="M8 0v16M0 8h16" stroke="#aaa" />
              <circle cx="8" cy="8" r="4.800" fill="#e8e8e8" />
              <path d="M8 3L13 8 8 13 3 8z" fill="#fff" stroke="#333" />
              <path d="M8 3.500v9M3.500 8h9" stroke="#777" strokeWidth=".8" />
            </svg>
          </StatusIcon>
          <StatusCell $ml={4} $w={124} $track={0.2}>EPSG:3378 (OTF)</StatusCell>
          <StatusIcon $ml={7}>
            <svg width="16" height="16" viewBox="0 0 16 16">
              <path d="M8 .8c4.500 0 8 2.600 8 6 0 2-1 3.500-2.600 4.500l1 4c-1.500 0-3-1.200-3.700-2.900C4.500 13.200 0 10.600 0 6.800c0-3.400 3.500-6 8-6z" fill="#666" />
            </svg>
          </StatusIcon>
          <SizeGrip />
        </StatusBar>
      </Window>
      <svg width="0" height="0">
        <defs>
          <linearGradient id="folder" x1="0" y1="0" x2="1" y2="1">
            <stop offset="0" stopColor="#f9a67f" />
            <stop offset="1" stopColor="#d9521d" />
          </linearGradient>
        </defs>
      </svg>
    </Desktop>
  );
}
